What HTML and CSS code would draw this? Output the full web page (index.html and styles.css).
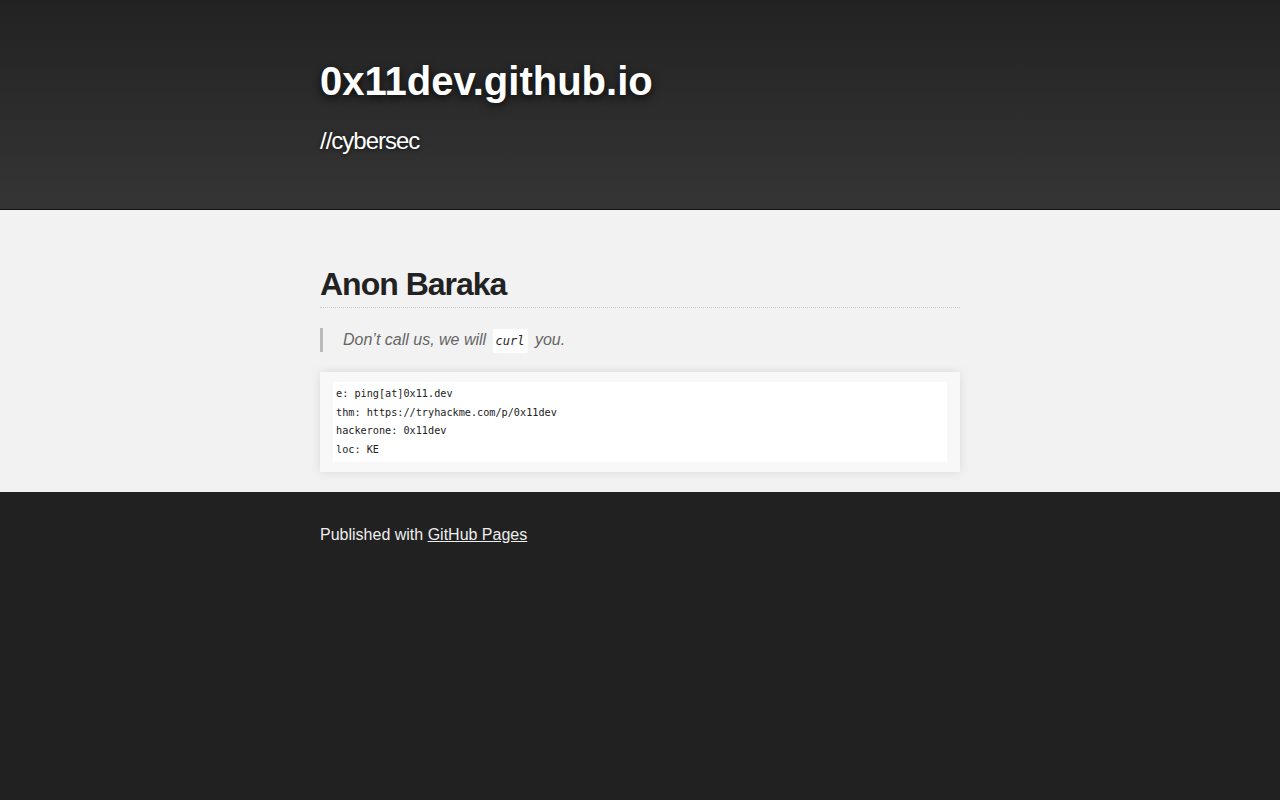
FILE: index.html
```html
<!DOCTYPE html>
<html>
<head>
	<meta charset="utf-8">
	<title>0x11dev.github.io</title>
	<link rel="stylesheet" href="styles.css">
</head>
<body>

	<header class="site_header">
		<div class="wrap">
			<h1 class="site_title">0x11dev.github.io</h1>
			<h2 class="site_tagline">//cybersec</h2>
		</div>
	</header>

	<div class="site_main">
		<div class="wrap">
			<h1 class="page_title">Anon Baraka</h1>

			<blockquote class="quote">
				<p>Don’t call us, we will <code class="code_inline">curl</code> you.</p>
			</blockquote>

			<div class="code_box">
<pre class="code_pre">e: ping[at]0x11.dev
thm: https://tryhackme.com/p/0x11dev
hackerone: 0x11dev
loc: KE</pre>
			</div>
		</div>
	</div>

	<footer class="site_footer">
		<div class="wrap">
			<p>Published with <a href="#">GitHub Pages</a></p>
		</div>
	</footer>

</body>
</html>
```

FILE: styles.css
```css
html {background: #212121;}
body {margin: 0; font-family: "Liberation Sans", Arial, sans-serif; font-size: 16px; line-height: 24px; color: #222;}
.wrap {width: 640px; margin: 0 auto;}

.site_header {background: linear-gradient(to bottom, #222 0%, #353535 100%); border-bottom: 1px solid #111;
		padding: 57px 0 53px;}
.site_title {margin: 0; font-size: 40px; line-height: 48px; font-weight: bold; letter-spacing: 0; color: #fff;
		text-shadow: 0 3px 8px rgba(0,0,0,0.8);}
.site_tagline {margin: 21px 0 0; font-size: 24px; line-height: 30px; font-weight: normal; letter-spacing: -1px; color: #fff;
		text-shadow: 0 1px 4px rgba(0,0,0,0.7);}

.site_main {background: #f2f2f2; padding: 54px 0 20px;}
.page_title {margin: 0 0 20px; font-size: 32px; line-height: 40px; font-weight: bold; letter-spacing: -1px; color: #222;
		padding-bottom: 3px; border-bottom: 1px dotted #ccc;}

.quote {margin: 0 0 20px; padding: 0 0 0 20px; border-left: 3px solid #bbb; font-style: italic; color: #666;}
.quote p {margin: 0;}
.code_inline {font-family: "DejaVu Sans Mono", monospace; font-size: 12px; line-height: 1; color: #222; background: #fff;
		padding: 5px 3px; border-radius: 2px; margin: 0 3px 0 2px;}

.code_box {background: #f8f8f8; padding: 10px 13px; box-shadow: 0 0 10px rgba(0,0,0,0.1);}
.code_pre {margin: 0; background: #fff; padding: 3px; font-family: "DejaVu Sans Mono", monospace; font-size: 10.2px;
		line-height: 18.5px; color: #222;}

.site_footer {padding: 31px 0 30px; color: #eee;}
.site_footer p {margin: 0;}
.site_footer a {color: #eee;}
```
